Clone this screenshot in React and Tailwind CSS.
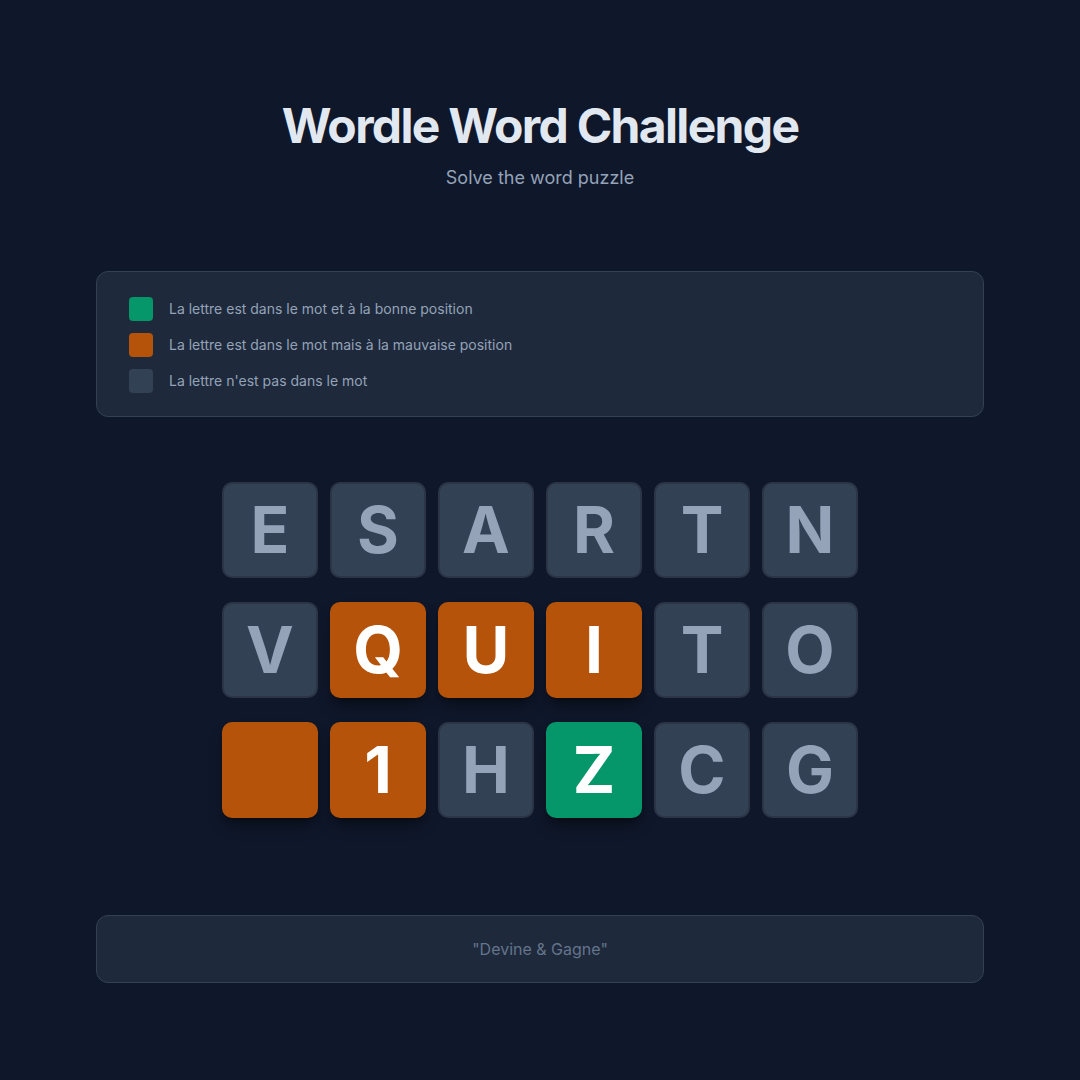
const rows = [
  [
    ["E", "absent"],
    ["S", "absent"],
    ["A", "absent"],
    ["R", "absent"],
    ["T", "absent"],
    ["N", "absent"],
  ],
  [
    ["V", "absent"],
    ["Q", "present"],
    ["U", "present"],
    ["I", "present"],
    ["T", "absent"],
    ["O", "absent"],
  ],
  [
    ["", "present"],
    ["1", "present"],
    ["H", "absent"],
    ["Z", "correct"],
    ["C", "absent"],
    ["G", "absent"],
  ],
];

const tileStyles = {
  absent: "bg-[#334155] border-[#2b3547] text-[#94a3b8]",
  present: "bg-[#b45309] border-[#b45309] text-white shadow-lg shadow-black/40",
  correct: "bg-[#059669] border-[#059669] text-white shadow-lg shadow-black/40",
};

const legend = [
  ["bg-[#059669]", "La lettre est dans le mot et à la bonne position"],
  ["bg-[#b45309]", "La lettre est dans le mot mais à la mauvaise position"],
  ["bg-[#334155]", "La lettre n'est pas dans le mot"],
];

function Tile({ letter, state }) {
  return (
    <div
      className={`w-[96px] h-[96px] rounded-[10px] border-2 flex items-center justify-center text-[64px] font-bold leading-none ${tileStyles[state]}`}
    >
      {letter}
    </div>
  );
}

export default function App() {
  return (
    <div
      className="min-h-[1080px] w-full bg-[#0f172a] pt-[102px]"
      style={{ fontFamily: "Inter, 'Noto Sans', sans-serif" }}
    >
      {/* header */}
      <div className="text-center">
        <h1 className="text-5xl leading-none font-bold text-[#e2e8f0] tracking-[-0.035em]">
          Wordle Word Challenge
        </h1>
        <p className="mt-[14px] text-lg text-[#94a3b8]">Solve the word puzzle</p>
      </div>

      {/* legend */}
      <div className="w-[888px] mx-auto mt-[79px] bg-[#1e293b] border border-[#334155] rounded-xl px-8 pt-[25px] pb-[23px] flex flex-col gap-3">
        {legend.map(([color, text]) => (
          <div key={text} className="flex items-center gap-4">
            <div className={`w-6 h-6 rounded ${color}`} />
            <span className="text-sm text-[#94a3b8]">{text}</span>
          </div>
        ))}
      </div>

      {/* board */}
      <div className="mt-[65px] flex flex-col items-center gap-6">
        {rows.map((row, i) => (
          <div key={i} className="flex gap-3">
            {row.map(([letter, state], j) => (
              <Tile key={j} letter={letter} state={state} />
            ))}
          </div>
        ))}
      </div>

      {/* footer */}
      <div className="w-[888px] mx-auto mt-[97px] bg-[#1e293b] border border-[#334155] rounded-xl py-[21px] text-center text-[#64748b]">
        "Devine &amp; Gagne"
      </div>
    </div>
  );
}
